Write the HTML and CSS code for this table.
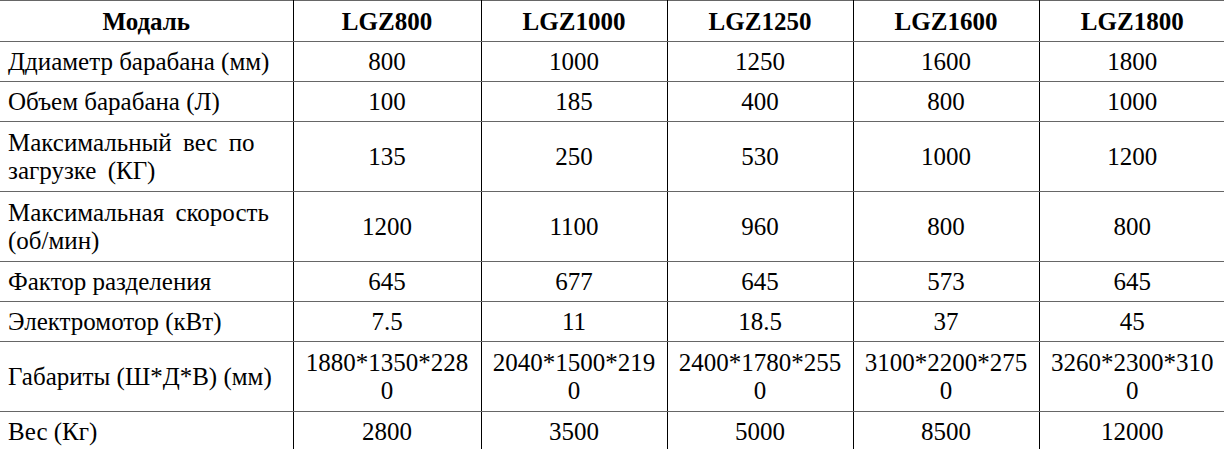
FILE: index.html
```html
<!DOCTYPE html>
<html>
  <head>
    <meta charset="UTF-8">
    <link rel="stylesheet" href="styles.css">
  </head>
  <body>
    <table class="spec-table">
      <colgroup>
        <col class="col-name">
        <col class="col-model-a">
        <col class="col-model">
        <col class="col-model">
        <col class="col-model">
        <col class="col-model">
      </colgroup>
      <thead>
        <tr>
          <th>Модаль</th>
          <th>LGZ800</th>
          <th>LGZ1000</th>
          <th>LGZ1250</th>
          <th>LGZ1600</th>
          <th>LGZ1800</th>
        </tr>
      </thead>
      <tbody>
        <tr>
          <td>Ддиаметр барабана (мм)</td>
          <td>800</td><td>1000</td><td>1250</td><td>1600</td><td>1800</td>
        </tr>
        <tr>
          <td>Объем барабана (Л)</td>
          <td>100</td><td>185</td><td>400</td><td>800</td><td>1000</td>
        </tr>
        <tr class="tall">
          <td class="spread">Максимальный вес по загрузке (КГ)</td>
          <td>135</td><td>250</td><td>530</td><td>1000</td><td>1200</td>
        </tr>
        <tr class="tall">
          <td class="spread">Максимальная скорость (об/мин)</td>
          <td>1200</td><td>1100</td><td>960</td><td>800</td><td>800</td>
        </tr>
        <tr>
          <td>Фактор разделения</td>
          <td>645</td><td>677</td><td>645</td><td>573</td><td>645</td>
        </tr>
        <tr>
          <td>Электромотор (кВт)</td>
          <td>7.5</td><td>11</td><td>18.5</td><td>37</td><td>45</td>
        </tr>
        <tr class="tall">
          <td>Габариты (Ш*Д*В) (мм)</td>
          <td class="dims">1880*1350*2280</td>
          <td class="dims">2040*1500*2190</td>
          <td class="dims">2400*1780*2550</td>
          <td class="dims">3100*2200*2750</td>
          <td class="dims">3260*2300*3100</td>
        </tr>
        <tr>
          <td>Вес (Кг)</td>
          <td>2800</td><td>3500</td><td>5000</td><td>8500</td><td>12000</td>
        </tr>
      </tbody>
    </table>
  </body>
</html>
```

FILE: styles.css
```css
body {
  margin: 0;
  background: #fff;
  color: #000;
  font-family: "Liberation Serif", "Times New Roman", serif;
}
.spec-table {
  width: 1224px;
  table-layout: fixed;
  border-collapse: collapse;
  font-size: 25px;
  line-height: 28px;
}
.col-name {
  width: 293px;
}
.col-model-a {
  width: 188px;
}
.col-model {
  width: 186px;
}
.spec-table th,
.spec-table td {
  height: 40px;
  padding: 0 8px;
  box-sizing: border-box;
  text-align: center;
  vertical-align: middle;
  border-top: 1px solid #666;
  border-bottom: 1px solid #666;
  border-left: 1px solid #000;
  border-right: 1px solid #000;
}
.spec-table th {
  font-weight: bold;
  height: 41px;
  padding-top: 2px;
}
.spec-table tr > :first-child {
  border-left: none;
}
.spec-table tr > :last-child {
  border-right: none;
}
.spec-table td:first-child {
  text-align: left;
}
.spec-table td.spread {
  word-spacing: 5px;
}
.spec-table tr.tall td {
  height: 70px;
}
.spec-table td.dims {
  word-break: break-all;
}
```
